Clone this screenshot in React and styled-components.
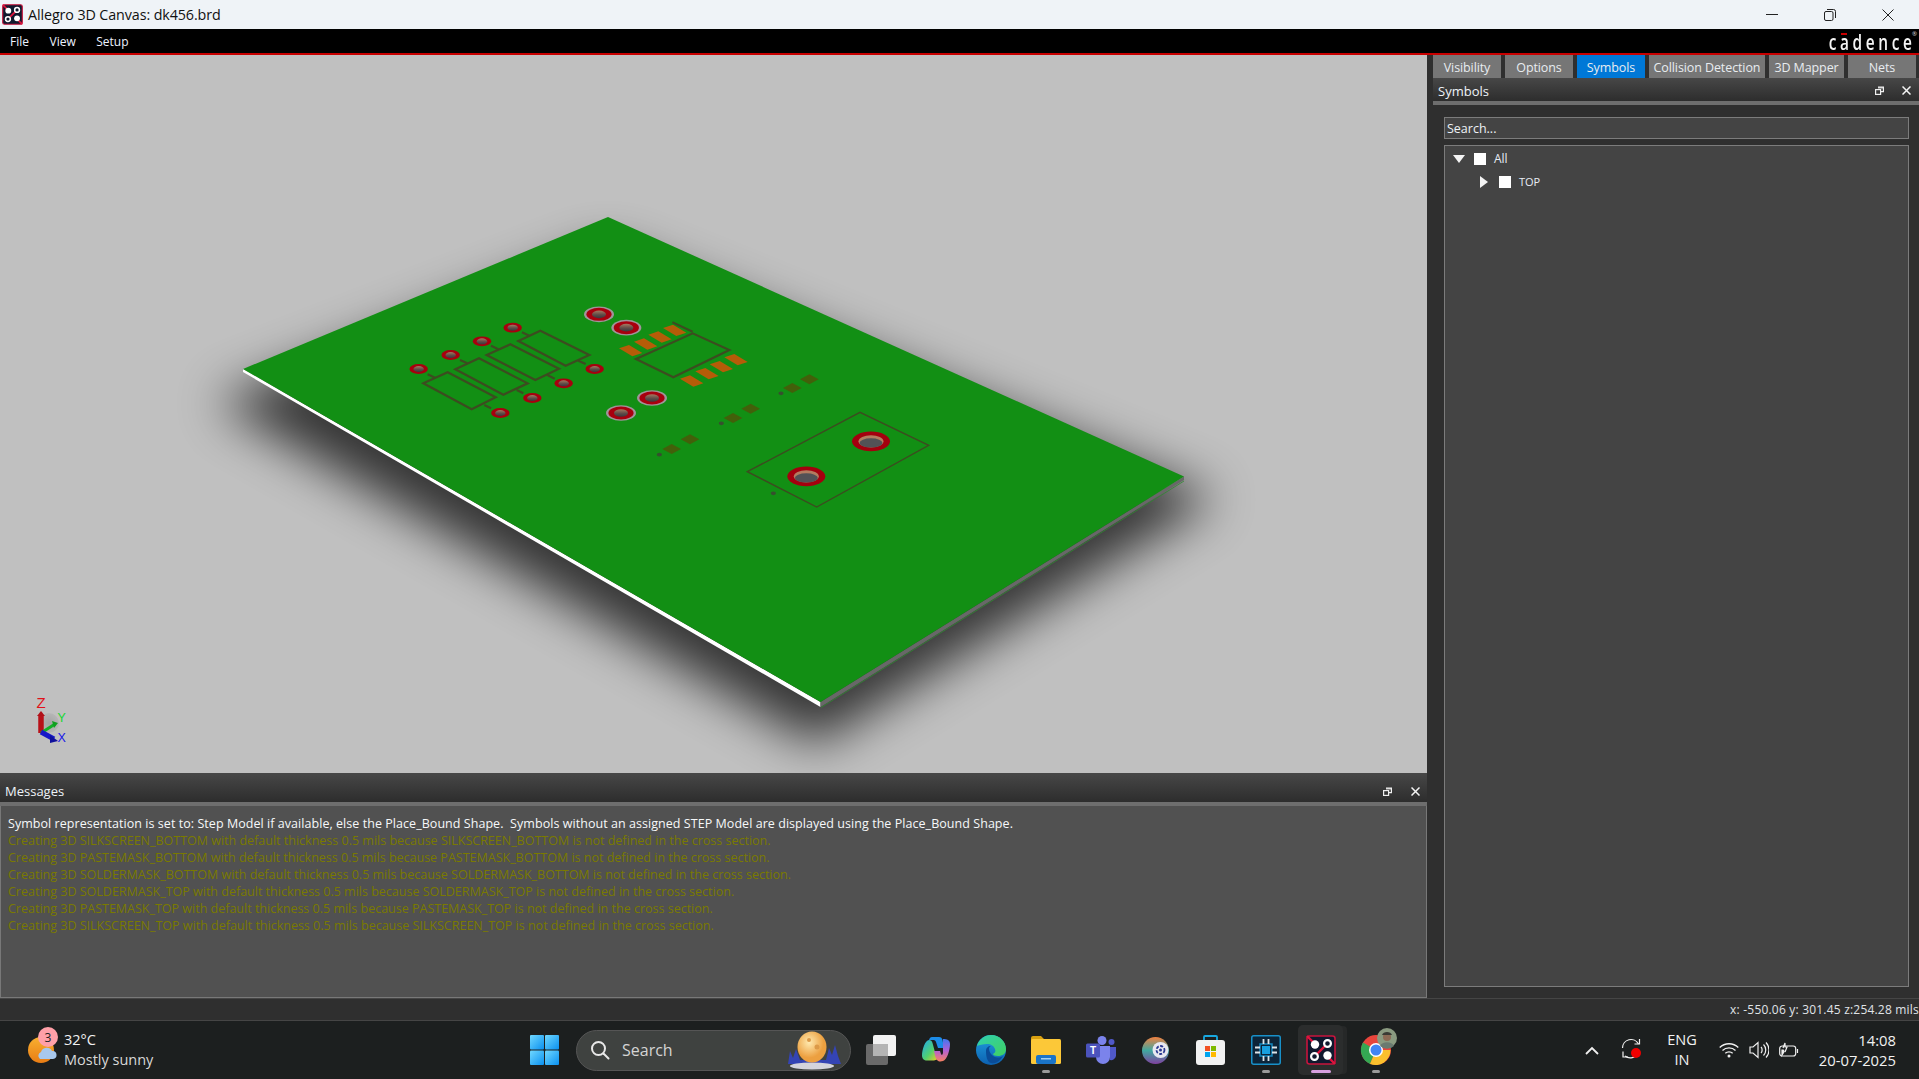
import React from "react";
import styled, { createGlobalStyle } from "styled-components";

const Global = createGlobalStyle`
  html, body { margin: 0; padding: 0; background: #000; overflow: hidden; }
  * { box-sizing: border-box; }
`;
const FONT = `"Open Sans", "Noto Sans", "Liberation Sans", sans-serif`;

const Screen = styled.div`
  width: 1919px; height: 1079px; display: flex; flex-direction: column;
  font-family: ${FONT}; overflow: hidden;
`;
const TitleBar = styled.div`
  height: 29px; background: #eff3f7; display: flex; align-items: center; color: #111;
  font-size: 14.3px; padding-left: 2px; flex: none;
`;
const TitleText = styled.span`margin-left: 5px; letter-spacing: -0.1px;`;
const WinControls = styled.div`margin-left: auto; display: flex; align-items: center; padding-right: 25px; gap: 46px;`;
const MenuBar = styled.div`
  height: 26px; background: #000; border-bottom: 2px solid #c80000; display: flex; align-items: center;
  padding-left: 10px; gap: 20.5px; color: #eef3ff; font-size: 12px; flex: none; position: relative;
`;
const Logo = styled.div`margin-left: auto; margin-right: 7px; position: relative; height: 22px;`;
const LogoText = styled.div`
  color: #f4f4f4; font-size: 22px; font-weight: 600; letter-spacing: 5.2px; line-height: 22px;
  transform: scaleX(0.7); transform-origin: right center; white-space: nowrap;
`;
const LogoLast = styled.span`letter-spacing: 0;`;
const LogoBar = styled.i`position: absolute; right: 65px; top: 3px; width: 6px; height: 2px; background: #c80000;`;
const LogoMark = styled.span`position: absolute; right: -5px; top: 1px; font-size: 6px; line-height: 6px; color: #ddd;`;
const Main = styled.div`flex: 1; display: flex; min-height: 0;`;
const LeftCol = styled.div`width: 1427px; display: flex; flex-direction: column;`;
const Canvas = styled.div`height: 718px; background: #c0c0c0; flex: none;`;
const Stage = styled.svg`display: block; width: 1427px; height: 718px;`;
const DockHead = styled.div`
  height: ${p => p.$h}px; background: linear-gradient(#474747, #2d2d2d); color: #eef3f8; font-size: 13px;
  display: flex; align-items: center; padding: ${p => p.$pt}px ${p => p.$pr}px 0 ${p => p.$pl}px; flex: none;
`;
const DockTitle = styled.span`flex: 1;`;
const DockIcons = styled.div`display: flex; align-items: center; gap: ${p => p.$gap}px;`;
const DockBar = styled.div`height: 4px; background: #6e6e6e; flex: none;`;
const MsgBody = styled.div`
  flex: 1; background: #515151; border: 1px solid #787878; border-top: 0; padding: 9px 7px; font-size: 12.5px;
  line-height: 17px; white-space: pre; letter-spacing: 0.05px;
`;
const MsgLine = styled.div`
  color: ${p => (p.$warn ? "#7a7a00" : "#f6f8fa")};
  letter-spacing: ${p => (p.$warn ? "0" : "0.05px")};
`;
const RightCol = styled.div`width: 492px; background: #2f2f2f; display: flex; flex-direction: column;`;
const Tabs = styled.div`
  height: 23px; display: flex; gap: 4px; margin-left: 6px; background: #2f2f2f; flex: none; position: relative;
`;
const Tab = styled.div`
  width: ${p => p.$w}px; background: ${p => (p.$active ? "#0078d7" : "#767676")}; color: #e8ecf0; font-size: 12.5px;
  display: flex; align-items: center; justify-content: center; white-space: nowrap; letter-spacing: -0.1px; padding-top: 2px;
`;
const RightDock = styled.div`flex: 1; margin-left: 6px; display: flex; flex-direction: column; min-height: 0;`;
const PanelBody = styled.div`flex: 1; padding: 12px 10px 11px 11px; display: flex; flex-direction: column; gap: 6px; min-height: 0;`;
const Search = styled.div`
  height: 22px; border: 1px solid #7c7c7c; background: #444; color: #eef2f6; font-size: 12.5px;
  display: flex; align-items: center; padding-left: 2px; flex: none;
`;
const Tree = styled.div`flex: 1; border: 1px solid #7c7c7c; background: #444; padding: 1px 0 0 8px;`;
const TreeRow = styled.div`
  display: flex; align-items: center; height: 23px; padding-left: ${p => p.$indent}px; gap: 8px;
  color: #e8ecf4; font-size: ${p => p.$size}px;
`;
const Check = styled.i`width: 12px; height: 12px; background: #fff; display: block; margin-left: 1px;`;
const StatusBar = styled.div`
  height: 22px; background: #2f2f2f; border-top: 1px solid #454545; color: #e0e4e8; font-size: 12px;
  display: flex; align-items: center; justify-content: flex-end; flex: none; white-space: nowrap; letter-spacing: 0.2px;
`;
const Taskbar = styled.div`
  height: 59px; background: #1c1f1f; border-top: 1px solid #454545; display: flex; align-items: center; flex: none; color: #f2f2f2;
`;
const Weather = styled.div`width: 530px; display: flex; align-items: center; padding-left: 27px; gap: 5px; flex: none;`;
const WeatherIcon = styled.div`width: 32px; height: 38px; position: relative; flex: none;`;
const WeatherArt = styled.svg`position: absolute; left: 0; top: 0;`;
const Badge = styled.span`
  position: absolute; left: 11px; top: -4px; width: 20px; height: 20px; border-radius: 50%; background: #ffa0a8;
  color: #222; font-size: 12px; display: flex; align-items: center; justify-content: center;
`;
const WeatherText = styled.div`font-size: 14.5px; line-height: 20px; white-space: nowrap;`;
const Muted = styled.div`color: #d8d8d8;`;
const Start = styled.div`width: 29px; flex: none; margin-right: 17px; display: flex;`;
const SearchPill = styled.div`
  width: 275px; height: 41px; border-radius: 21px; background: #3f4240; border: 1px solid #555; display: flex; align-items: center;
  padding-left: 13px; gap: 12px; color: #d4d4d4; font-size: 16px; position: relative; flex: none; margin-right: 2px;
`;
const Moon = styled.div`position: absolute; right: 5px; bottom: 0; display: flex;`;
const Apps = styled.div`display: flex; align-items: center; height: 100%;`;
const AppSlot = styled.div`
  width: ${p => (p.$active ? 45 : 55)}px; margin: 0 ${p => (p.$active ? 5 : 0)}px; height: 50px; display: flex;
  align-items: center; justify-content: center; position: relative; border-radius: 5px;
  ${p => (p.$active ? "background: #2b2d2d; box-shadow: 5px 0 0 -1px #262828;" : "")}
`;
const Pip = styled.i`
  position: absolute; bottom: 2px; left: 50%; height: 3px; border-radius: 2px; transform: translateX(-50%);
  width: ${p => (p.$active ? 20 : 8)}px; background: ${p => (p.$active ? "#d8a0e0" : "#9a9a9a")};
`;
const OverflowSvg = styled.svg`overflow: visible;`;
const Tray = styled.div`margin-left: auto; display: flex; align-items: center; padding-right: 23px;`;
const TrayIcon = styled.div`display: flex; margin-right: ${p => p.$mr}px;`;
const Lang = styled.div`font-size: 14.5px; line-height: 20px; text-align: center; margin-right: 22px;`;
const Clock = styled.div`font-size: 14.8px; line-height: 20px; text-align: right; white-space: nowrap; margin-left: 20px;`;

const z3 = ([x, y]) => [380 + x / 3, 280 + y / 3];
const z4 = ([x, y]) => [640 + x / 3, 370 + y / 3];
const pts = (a, f = p => p) => a.map(f).map(p => p.join(",")).join(" ");

const smallPads = [[116,267],[212,225],[306,184],[398,143],[361,399],[457,354],[551,310],[644,267]].map(z3);
const bigPads = [[657,103],[739,143],[816,354],[723,399]].map(z3);
const rects = [
  [[130,310],[203,277],[347,352],[275,388]],
  [[226,268],[297,235],[443,310],[370,344]],
  [[320,225],[391,193],[537,266],[466,300]],
  [[415,183],[481,152],[628,225],[557,257]],
];
const stubs = [
  [[143,283],[165,293]],[[240,240],[262,250]],[[333,197],[355,208]],[[426,157],[448,167]],
  [[313,375],[333,385]],[[410,330],[430,340]],[[502,285],[524,296]],[[595,242],[617,252]],
];
const orange = [[752,212],[797,192],[840,171],[884,151],[935,303],[981,281],[1024,260],[1068,239]];
const olive = [[95,237],[150,208],[279,144],[332,116],[457,54],[508,28]];
const dots = [[58,254],[244,160],[423,70],[400,370]].map(z4);

const Pad = ({ c: [x, y] }) => (
  <g>
    <ellipse cx={x} cy={y} rx="9.2" ry="4.9" fill="#a8000e" />
    <ellipse cx={x} cy={y} rx="5.2" ry="3" fill="url(#copper)" />
  </g>
);
const BigPad = ({ c: [x, y] }) => (
  <g>
    <ellipse cx={x} cy={y} rx="15" ry="7.8" fill="#a0949a" />
    <ellipse cx={x} cy={y} rx="12.6" ry="6.5" fill="#a8000e" />
    <ellipse cx={x} cy={y} rx="7" ry="3.8" fill="url(#copper)" />
  </g>
);
const Hole = ({ c: [x, y] }) => (
  <g>
    <ellipse cx={x} cy={y} rx="19" ry="9.8" fill="#a4000e" />
    <ellipse cx={x} cy={y} rx="12.5" ry="6.2" fill="#b47c60" />
    <ellipse cx={x} cy={y + 1.6} rx="11.5" ry="4.6" fill="#525256" />
  </g>
);

const BoardScene = () => (
  <Stage viewBox="0 55 1427 718">
    <defs>
      <filter id="soft" x="-30%" y="-30%" width="160%" height="160%"><feGaussianBlur stdDeviation="25" /></filter>
      <linearGradient id="copper" x1="0" y1="0" x2="0" y2="1">
        <stop offset="0" stopColor="#a87860" /><stop offset="0.55" stopColor="#604c48" /><stop offset="1" stopColor="#38383e" />
      </linearGradient>
      <radialGradient id="blob"><stop offset="0" stopColor="#a4a4a4" /><stop offset="1" stopColor="#b6b6b6" /></radialGradient>
    </defs>
    <polygon points="216,402 816,744 1216,498 608,250" fill="#000" opacity="0.72" filter="url(#soft)" />
    <polygon points="243,369 820.5,702 820.5,707 243,372" fill="#ffffff" />
    <polygon points="820.5,702 1184,476.5 1184,480 820.5,707" fill="#686868" />
    <polyline points="821,707.5 1184,481" fill="none" stroke="#2e8a30" strokeWidth="0.8" />
    <polygon points="608,217 243,369 820.5,702 1184,476.5" fill="#128f14" />
    <g fill="none" stroke="#3c4c20" strokeWidth="2.2">
      {rects.map((r, i) => <polygon key={i} points={pts(r, z3)} />)}
      {stubs.map((s, i) => <polyline key={i} points={pts(s, z3)} />)}
      <polygon points={pts([[768,237],[938,160],[1048,210],[880,292]], z3)} />
      <polyline points={pts([[877,127],[938,155]], z3)} />
      <polygon strokeWidth="1.4" points={pts([[322,305],[660,127],[866,226],[530,411]], z4)} />
    </g>
    {orange.map(([x, y], i) => (
      <polygon key={i} fill="#b65c08" points={pts([[x-35,y-7],[x-5,y-17],[x+35,y+7],[x+5,y+17]], z3)} />
    ))}
    {olive.map(([x, y], i) => (
      <polygon key={i} fill="#42600a" points={pts([[x-28,y],[x,y-15],[x+28,y],[x,y+15]], z4)} />
    ))}
    {dots.map(([x, y], i) => <ellipse key={i} cx={x} cy={y} rx="2.6" ry="1.8" fill="#36502e" />)}
    {smallPads.map((c, i) => <Pad key={i} c={c} />)}
    {bigPads.map((c, i) => <BigPad key={i} c={c} />)}
    <Hole c={z4([499,319])} />
    <Hole c={z4([693,214])} />
    <circle cx="49" cy="723" r="10" fill="url(#blob)" />
    <line x1="41" y1="733" x2="41" y2="716" stroke="#b81018" strokeWidth="5.5" />
    <polygon points="37,716 41,711 45,716" fill="#b01018" />
    <line x1="41" y1="733" x2="55" y2="724" stroke="#14b028" strokeWidth="3" />
    <polygon points="52,721 58,723 54,728" fill="#10a020" />
    <line x1="41" y1="732" x2="54" y2="739" stroke="#1818c8" strokeWidth="5" />
    <polygon points="50,735 58,741 50,743" fill="#10109c" />
    <text x="36.5" y="708" fontFamily="Liberation Sans" fontSize="15" fill="#e01018">Z</text>
    <text x="57.5" y="722" fontFamily="Liberation Sans" fontSize="12.5" fill="#18d830">Y</text>
    <text x="57.5" y="742" fontFamily="Liberation Sans" fontSize="12.5" fill="#1818e8">X</text>
  </Stage>
);

const AllegroIcon = ({ s }) => (
  <svg width={s} height={s} viewBox="0 0 30 30">
    <rect x="1" y="1" width="28" height="28" rx="2.5" fill="#10192e" stroke="#c8143c" strokeWidth="1.6" />
    <line x1="1" y1="1" x2="8" y2="8" stroke="#e0143c" strokeWidth="2.4" />
    <line x1="22" y1="22" x2="29" y2="29" stroke="#e0143c" strokeWidth="2.4" />
    <line x1="8" y1="22" x2="22" y2="8" stroke="#e0143c" strokeWidth="2.4" />
    <circle cx="9" cy="9.5" r="4.2" fill="#fff" />
    <circle cx="21.5" cy="20.5" r="4.2" fill="#fff" />
    <circle cx="21.5" cy="8.5" r="3.4" fill="#10192e" stroke="#fff" strokeWidth="2.2" />
    <circle cx="8.5" cy="21.5" r="3.4" fill="#10192e" stroke="#fff" strokeWidth="2.2" />
  </svg>
);
const Minimize = () => <svg width="12" height="2"><rect width="12" height="1" fill="#222" /></svg>;
const Restore = () => (
  <svg width="12" height="12" viewBox="0 0 12 12" fill="none" stroke="#222">
    <rect x="0.5" y="2.5" width="8.5" height="9" rx="1.5" /><path d="M3 .5h6.5a2 2 0 0 1 2 2V9" />
  </svg>
);
const Close = () => (
  <svg width="12" height="12" viewBox="0 0 12 12" stroke="#222"><path d="M.5.5l11 11M11.5.5l-11 11" /></svg>
);
const Float = () => (
  <svg width="9" height="9" viewBox="0 0 9 9" fill="none" stroke="#f0f0f0" strokeWidth="1.2">
    <rect x=".6" y="3.6" width="5" height="4.8" /><path d="M3 1h5.4v4.6H6" /><path d="M3 1.8h5.4" />
  </svg>
);
const XIcon = () => (
  <svg width="9" height="9" viewBox="0 0 9 9" stroke="#f4f4f4" strokeWidth="1.5"><path d="M.5.5l8 8M8.5.5l-8 8" /></svg>
);
const Tri = ({ down }) => (
  <svg width="12" height="12" viewBox="0 0 12 12" fill="#f4f4f4">
    <polygon points={down ? "0,2 12,2 6,10" : "2,0 10,6 2,12"} />
  </svg>
);
const WeatherSvg = () => (
  <WeatherArt width="32" height="38" viewBox="0 0 32 38">
    <defs><linearGradient id="sun" x1="0" y1="0" x2="0" y2="1"><stop offset="0" stopColor="#f8b030" /><stop offset="1" stopColor="#e87c14" /></linearGradient></defs>
    <circle cx="14" cy="19" r="13" fill="url(#sun)" />
    <path d="M13 28a4 4 0 0 1 1-7 6 6 0 0 1 11-1 4 4 0 0 1 1 8z" fill="#a8c8ec" />
  </WeatherArt>
);
const StartIcon = () => (
  <svg width="29" height="30" viewBox="0 0 29 30">
    <defs><linearGradient id="win" x1="0" y1="0" x2="1" y2="1"><stop offset="0" stopColor="#70d8ff" /><stop offset="1" stopColor="#0a90f0" /></linearGradient></defs>
    <rect width="14" height="14.5" rx="1" fill="url(#win)" /><rect x="15" width="14" height="14.5" rx="1" fill="url(#win)" />
    <rect y="15.5" width="14" height="14.5" rx="1" fill="url(#win)" /><rect x="15" y="15.5" width="14" height="14.5" rx="1" fill="url(#win)" />
  </svg>
);
const SearchGlyph = () => (
  <svg width="20" height="20" viewBox="0 0 20 20" fill="none" stroke="#e8e8e8" strokeWidth="2"><circle cx="8.5" cy="8.5" r="6.5" /><path d="M13.5 13.5l5 5" strokeLinecap="round" /></svg>
);
const MoonArt = () => (
  <svg width="60" height="40" viewBox="0 0 60 40">
    <defs><radialGradient id="mn" cx=".4" cy=".35"><stop offset="0" stopColor="#ffeab0" /><stop offset="1" stopColor="#eca040" /></radialGradient></defs>
    <path d="M3 34l2-13 3 7 3-9 4 11h26l3-12 3 7 3-10 3 11 3 8z" fill="#3444b4" />
    <ellipse cx="27" cy="36" rx="22" ry="3.5" fill="#d4d4dc" />
    <ellipse cx="27" cy="17" rx="14.5" ry="15.5" fill="url(#mn)" />
    <circle cx="24" cy="10" r="2" fill="#dc9a48" /><circle cx="32" cy="17" r="2.5" fill="#dc9a48" />
  </svg>
);
const TaskView = () => (
  <svg width="32" height="30" viewBox="0 0 32 30">
    <rect x="8" y="0" width="23" height="21" rx="2" fill="#f2f2f2" /><rect x="1" y="9" width="22" height="21" rx="2" fill="#6a6a6a" />
    <rect x="8" y="9" width="15" height="12" fill="#b4b4b4" />
  </svg>
);
const Copilot = () => (
  <svg width="30" height="28" viewBox="0 0 30 28">
    <defs>
      <linearGradient id="cp1" x1="0" y1="0" x2="1" y2="1"><stop offset="0" stopColor="#20a8f0" /><stop offset=".55" stopColor="#50d070" /><stop offset="1" stopColor="#f4d020" /></linearGradient>
      <linearGradient id="cp2" x1="0" y1="0" x2="0" y2="1"><stop offset="0" stopColor="#4078f0" /><stop offset=".5" stopColor="#b060d8" /><stop offset="1" stopColor="#f88060" /></linearGradient>
    </defs>
    <path d="M11 1h7c2 0 3 1 3.5 3l1.5 8h-6l-2-6c-.5-1.5-1.5-2-3-2H8C8.5 2 9.5 1 11 1z" fill="#1c8ce8" />
    <path d="M8 4c2 0 3 1 3.5 3l3 11c.5 2 1.5 3.500 3 4.500-2 1.500-4 2-6 2H6c-3 0-5-2-5-5C1 14 4 4 8 4z" fill="url(#cp1)" />
    <path d="M22 3c4 0 7 1 7 5 0 6-3 16-7 17-2 .6-4 1-6-1-2-2-2-6-3-9h6l1 3c.6 1.500 1.500 1 2-1z" fill="url(#cp2)" />
  </svg>
);
const Edge = () => (
  <svg width="30" height="30" viewBox="0 0 30 30">
    <defs>
      <linearGradient id="ed1" x1="0" y1="0" x2="1" y2="1"><stop offset="0" stopColor="#30d0b0" /><stop offset="1" stopColor="#40d060" /></linearGradient>
      <linearGradient id="ed2" x1="0" y1="0" x2="0" y2="1"><stop offset="0" stopColor="#20a0e0" /><stop offset="1" stopColor="#0c60b0" /></linearGradient>
    </defs>
    <circle cx="15" cy="15" r="15" fill="url(#ed2)" />
    <path d="M1 11C3 4 9 0 15 0c9 0 15 7 15 14 0 5-4 7-8 7-3 0-5-1-5-2 2-1 3-3 2-5-1-3-4-5-8-5-4 0-8 1-10 2z" fill="url(#ed1)" />
    <path d="M10 16c0-3 2-5 5-5-3 1-2 5 0 8 2 3 7 5 12 2-3 5-7 8-12 7-4-1-5-7-5-12z" fill="#0a4c98" />
  </svg>
);
const Folder = () => (
  <svg width="30" height="28" viewBox="0 0 30 28">
    <path d="M0 2a2 2 0 0 1 2-2h8l3 3h15v4H0z" fill="#d8a010" /><rect y="3" width="30" height="25" rx="1.5" fill="#fcc838" />
    <rect x="5" y="19" width="20" height="9" rx="2" fill="#1a74c8" /><rect x="10" y="22" width="10" height="1.5" fill="#a0d0f4" />
  </svg>
);
const Teams = () => (
  <svg width="30" height="28" viewBox="0 0 30 28">
    <circle cx="16" cy="4.5" r="4.5" fill="#7b83eb" /><circle cx="25.5" cy="6" r="3" fill="#5059c9" />
    <path d="M22 11h8v9a5 5 0 0 1-6 4z" fill="#5059c9" /><path d="M10 10h14v11a7 7 0 0 1-14 0z" fill="#7b83eb" />
    <rect x="0" y="7.5" width="14" height="14" rx="1.5" fill="#4b53bc" />
    <text x="7" y="18" textAnchor="middle" fontFamily="Liberation Sans" fontSize="10" fontWeight="700" fill="#fff">T</text>
  </svg>
);
const Swirl = () => (
  <svg width="27" height="27" viewBox="0 0 27 27">
    <defs><linearGradient id="sw" x1="0" y1="0" x2="0" y2="1"><stop offset="0" stopColor="#f08040" /><stop offset=".5" stopColor="#40a8a0" /><stop offset="1" stopColor="#8040a0" /></linearGradient></defs>
    <circle cx="13.5" cy="13.5" r="13.5" fill="url(#sw)" /><circle cx="18.5" cy="13" r="8" fill="#e8e8f0" />
    <circle cx="18.5" cy="13" r="4" fill="none" stroke="#283890" strokeWidth="1.8" strokeDasharray="3 1.5" /><circle cx="18.5" cy="13" r="1.5" fill="#283890" />
  </svg>
);
const Store = () => (
  <svg width="29" height="30" viewBox="0 0 29 30">
    <path d="M8 7V2a1 1 0 0 1 1-1h11a1 1 0 0 1 1 1v5" fill="none" stroke="#18a8e0" strokeWidth="1.8" />
    <rect y="5" width="29" height="25" rx="3" fill="#f2f2f2" />
    <rect x="9" y="11" width="5" height="5" fill="#f25022" /><rect x="15" y="11" width="5" height="5" fill="#7fba00" />
    <rect x="9" y="17" width="5" height="5" fill="#00a4ef" /><rect x="15" y="17" width="5" height="5" fill="#ffb900" />
  </svg>
);
const Chip = () => (
  <svg width="30" height="30" viewBox="0 0 30 30">
    <rect x=".75" y=".75" width="28.5" height="28.5" rx="2" fill="#0c2438" stroke="#1890c8" strokeWidth="1.5" />
    <rect x="9" y="9" width="12" height="12" fill="none" stroke="#1488c0" strokeWidth="1.5" />
    <rect x="11" y="11" width="8" height="8" fill="#18a0e0" />
    <g stroke="#dce4e8" strokeWidth="1.8">
      <path d="M12.5 4v5M17.5 4v5M12.5 21v5M17.5 21v5M4 12.5h5M4 17.5h5M21 12.5h5M21 17.5h5" />
    </g>
  </svg>
);
const Chrome = () => (
  <OverflowSvg width="30" height="30" viewBox="0 0 30 30">
    <circle cx="15" cy="15" r="15" fill="#e8453c" />
    <path d="M15 15L2 7.5A15 15 0 0 0 9 29z" fill="#34a853" />
    <path d="M15 15H29.5A15 15 0 0 1 9 29L15 15z" fill="#fbc02d" />
    <circle cx="15" cy="15" r="7" fill="#fff" /><circle cx="15" cy="15" r="5.5" fill="#4285f4" />
    <circle cx="26" cy="3" r="10" fill="#8a9a80" />
    <circle cx="26" cy="2" r="4" fill="#8c6a54" /><path d="M21 0c1-4 9-4 10 0z" fill="#3a3a34" /><path d="M19 11c2-5 12-5 14 0a10 10 0 0 1-14 0z" fill="#6a7a70" />
  </OverflowSvg>
);
const Sync = () => (
  <svg width="22" height="24" viewBox="0 0 22 24" fill="none" stroke="#f0f0f0" strokeWidth="1.2">
    <path d="M1.5 10a8.5 8.5 0 0 1 16-4" /><path d="M18.5 1v5h-5" /><path d="M17 15a8.5 8.5 0 0 1-13 3" /><path d="M2 13.5V19h5" />
    <circle cx="15" cy="15" r="5" fill="#f00000" stroke="none" />
  </svg>
);
const Wifi = () => (
  <svg width="20" height="16" viewBox="0 0 20 16" fill="none" stroke="#f0f0f0" strokeWidth="1.3">
    <path d="M.7 5.5c5-5 13.600-5 18.600 0M3.500 8.500c3.500-3.500 9.500-3.500 13 0M6.300 11.300c2-2 5.400-2 7.400 0" /><circle cx="10" cy="14" r="1.5" fill="#f0f0f0" stroke="none" />
  </svg>
);
const Speaker = () => (
  <svg width="20" height="18" viewBox="0 0 20 18" fill="none" stroke="#f0f0f0" strokeWidth="1.2">
    <path d="M1 6h3l5-4.5v15L4 12H1z" /><path d="M12 6c1.5 1.5 1.5 4.5 0 6M14.5 3.500c3 3 3 8 0 11M17 1.500c4 4 4 11 0 15" />
  </svg>
);
const Battery = () => (
  <svg width="20" height="18" viewBox="0 0 20 18" fill="none" stroke="#f0f0f0" strokeWidth="1.2">
    <rect x=".7" y="5" width="16" height="10" rx="2.5" /><path d="M18.5 8v4" /><path d="M3 14V9h3z" fill="#f0f0f0" /><path d="M4 7l2-5 0 4 2 0-2 5" fill="#1c1f1f" />
  </svg>
);
const Chevron = () => (
  <svg width="14" height="9" viewBox="0 0 14 9" fill="none" stroke="#f0f0f0" strokeWidth="1.8"><path d="M1 8l6-6 6 6" /></svg>
);

const messages = [
  "Creating 3D SILKSCREEN_BOTTOM with default thickness 0.5 mils because SILKSCREEN_BOTTOM is not defined in the cross section.",
  "Creating 3D PASTEMASK_BOTTOM with default thickness 0.5 mils because PASTEMASK_BOTTOM is not defined in the cross section.",
  "Creating 3D SOLDERMASK_BOTTOM with default thickness 0.5 mils because SOLDERMASK_BOTTOM is not defined in the cross section.",
  "Creating 3D SOLDERMASK_TOP with default thickness 0.5 mils because SOLDERMASK_TOP is not defined in the cross section.",
  "Creating 3D PASTEMASK_TOP with default thickness 0.5 mils because PASTEMASK_TOP is not defined in the cross section.",
  "Creating 3D SILKSCREEN_TOP with default thickness 0.5 mils because SILKSCREEN_TOP is not defined in the cross section.",
];
const tabs = [["Visibility",68],["Options",68],["Symbols",68,true],["Collision Detection",116],["3D Mapper",75],["Nets",68]];
const apps = [
  [<TaskView />], [<Copilot />], [<Edge />], [<Folder />, "pip"], [<Teams />], [<Swirl />], [<Store />], [<Chip />, "pip"],
  [<AllegroIcon s={30} />, "active"], [<Chrome />, "pip"],
];

export default function App() {
  return (
    <Screen>
      <Global />
      <TitleBar>
        <AllegroIcon s={21} />
        <TitleText>Allegro 3D Canvas: dk456.brd</TitleText>
        <WinControls><Minimize /><Restore /><Close /></WinControls>
      </TitleBar>
      <MenuBar>
        <span>File</span><span>View</span><span>Setup</span>
        <Logo><LogoText>cadenc<LogoLast>e</LogoLast></LogoText><LogoBar /><LogoMark>®</LogoMark></Logo>
      </MenuBar>
      <Main>
        <LeftCol>
          <Canvas><BoardScene /></Canvas>
          <DockHead $h={29} $pt={7} $pl={5} $pr={7}>
            <DockTitle>Messages</DockTitle>
            <DockIcons $gap={19}><Float /><XIcon /></DockIcons>
          </DockHead>
          <DockBar />
          <MsgBody>
            <MsgLine>Symbol representation is set to: Step Model if available, else the Place_Bound Shape.  Symbols without an assigned STEP Model are displayed using the Place_Bound Shape.</MsgLine>
            {messages.map(m => <MsgLine key={m} $warn>{m}</MsgLine>)}
          </MsgBody>
        </LeftCol>
        <RightCol>
          <Tabs>{tabs.map(([t, w, a]) => <Tab key={t} $w={w} $active={a}>{t}</Tab>)}</Tabs>
          <RightDock>
            <DockHead $h={23} $pt={2} $pl={5} $pr={8}>
              <DockTitle>Symbols</DockTitle>
              <DockIcons $gap={18}><Float /><XIcon /></DockIcons>
            </DockHead>
            <DockBar />
            <PanelBody>
              <Search>Search...</Search>
              <Tree>
                <TreeRow $indent={0} $size={12}><Tri down /><Check />All</TreeRow>
                <TreeRow $indent={25} $size={11}><Tri /><Check />TOP</TreeRow>
              </Tree>
            </PanelBody>
          </RightDock>
        </RightCol>
      </Main>
      <StatusBar>x: -550.06 y: 301.45 z:254.28 mils</StatusBar>
      <Taskbar>
        <Weather>
          <WeatherIcon><WeatherSvg /><Badge>3</Badge></WeatherIcon>
          <WeatherText>32°C<Muted>Mostly sunny</Muted></WeatherText>
        </Weather>
        <Start><StartIcon /></Start>
        <SearchPill><SearchGlyph />Search<Moon><MoonArt /></Moon></SearchPill>
        <Apps>
          {apps.map(([icon, kind], i) => (
            <AppSlot key={i} $active={kind === "active"}>
              {icon}
              {kind && <Pip $active={kind === "active"} />}
            </AppSlot>
          ))}
        </Apps>
        <Tray>
          <TrayIcon $mr={22}><Chevron /></TrayIcon>
          <TrayIcon $mr={24}><Sync /></TrayIcon>
          <Lang>ENG<br />IN</Lang>
          <TrayIcon $mr={10}><Wifi /></TrayIcon>
          <TrayIcon $mr={10}><Speaker /></TrayIcon>
          <TrayIcon $mr={0}><Battery /></TrayIcon>
          <Clock>14:08<br />20-07-2025</Clock>
        </Tray>
      </Taskbar>
    </Screen>
  );
}
